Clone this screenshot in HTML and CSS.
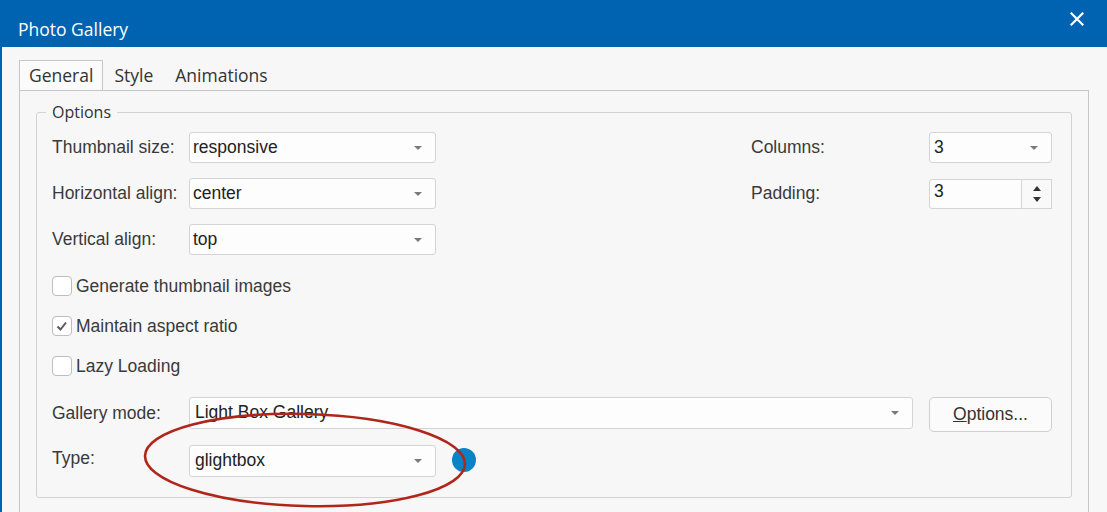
FILE: index.html
```html
<!DOCTYPE html>
<html lang="en">
<head>
  <meta charset="UTF-8" />
  <title>Photo Gallery</title>
  <link rel="stylesheet" href="styles.css">
</head>
<body>
  <div class="window">
    <div class="titlebar">
      <span class="title">Photo Gallery</span>
      <svg class="close" width="14" height="14" viewBox="0 0 14 14">
        <path d="M1.5 1.5 L12.5 12.5 M12.5 1.5 L1.5 12.5" stroke="#fff" stroke-width="2.2" stroke-linecap="square" />
      </svg>
    </div>

    <div class="content">
      <div class="tabs">
        <div class="tab active">General</div>
        <div class="tab">Style</div>
        <div class="tab">Animations</div>
      </div>

      <div class="panel">
        <fieldset class="options">
          <legend>Options</legend>

          <div class="row">
            <label class="lbl">Thumbnail size:</label>
            <div class="select">responsive<span class="arrow"></span></div>
            <label class="lbl lbl-right">Columns:</label>
            <div class="select small">3<span class="arrow"></span></div>
          </div>

          <div class="row">
            <label class="lbl">Horizontal align:</label>
            <div class="select">center<span class="arrow"></span></div>
            <label class="lbl lbl-right">Padding:</label>
            <div class="spin">
              <div class="spin-input">3</div>
              <div class="spin-btns">
                <span class="up"></span>
                <span class="down"></span>
              </div>
            </div>
          </div>

          <div class="row">
            <label class="lbl">Vertical align:</label>
            <div class="select">top<span class="arrow"></span></div>
          </div>

          <div class="checks">
            <div class="check">
              <span class="box"></span>
              <span>Generate thumbnail images</span>
            </div>
            <div class="check">
              <span class="box">
                <svg width="18" height="18" viewBox="0 0 18 18">
                  <path d="M4.5 9.5 L7.5 12.5 L13 5.5" fill="none" stroke="#5a5a5a" stroke-width="2" />
                </svg>
              </span>
              <span>Maintain aspect ratio</span>
            </div>
            <div class="check">
              <span class="box"></span>
              <span>Lazy Loading</span>
            </div>
          </div>

          <div class="row row-gallery">
            <label class="lbl">Gallery mode:</label>
            <div class="select wide">Light Box Gallery<span class="arrow"></span></div>
            <button class="btn"><u>O</u>ptions...</button>
          </div>

          <div class="row row-type">
            <label class="lbl">Type:</label>
            <div class="select">glightbox<span class="arrow"></span></div>
            <span class="info-dot"></span>
          </div>
        </fieldset>
      </div>
    </div>

    <!-- red annotation drawn over the Type row -->
    <svg class="mark" width="360" height="120" viewBox="0 0 360 120">
      <ellipse cx="165" cy="60" rx="160" ry="46" fill="none" stroke="#b1261b" stroke-width="2.6" transform="rotate(1.5 165 60)" />
    </svg>
  </div>
</body>
</html>
```

FILE: styles.css
```css
html, body {
  margin: 0;
  padding: 0;
  background: #f7f7f7;
  overflow: hidden;
}

.window {
  position: relative;
  height: 512px;
  overflow: hidden;
  border-left: 2px solid #0063b1;
  box-sizing: border-box;
  background: #f7f7f7;
}

.titlebar {
  height: 47px;
  background: #0063b1;
  display: flex;
  align-items: center;
  justify-content: space-between;
  padding: 0 23px 0 18px;
  margin-left: -2px;
}

.title {
  color: #fff;
  font-family: "Open Sans", "Noto Sans", sans-serif;
  font-size: 17.5px;
  margin-top: 11px;
}

.close {
  margin-top: -10px;
}

.content {
  padding: 13px 18px 0 17px;
}

.tabs {
  display: flex;
  font-family: "Open Sans", "Noto Sans", sans-serif;
  font-size: 17.5px;
  color: #333;
}

.tab {
  height: 29px;
  line-height: 29px;
  padding: 0 10px;
  border: 1px solid transparent;
  border-bottom: none;
}

.tab.active {
  padding: 0 9px 0 9px;
  background: #fbfbfb;
  border-color: #c6c6c6;
  position: relative;
  top: 1px;
  margin-top: -1px;
}

.panel {
  border: 1px solid #c6c6c6;
  padding: 10px 16px;
  height: 424px;
  box-sizing: border-box;
}

.options {
  margin: 0;
  border: 1px solid #d3d3d3;
  border-radius: 3px;
  padding: 9px 19px 20px 15px;
  font-family: "Liberation Sans", Arial, sans-serif;
  font-size: 17.5px;
  color: #3a3a3a;
}

.options legend {
  font-family: "Open Sans", "Noto Sans", sans-serif;
  font-size: 16px;
  line-height: 22px;
  padding: 0 6px;
  margin-left: -6px;
  color: #333;
}

.row {
  display: flex;
  align-items: center;
  height: 31px;
  margin-bottom: 15px;
}

.lbl {
  width: 137px;
  flex-shrink: 0;
}

.lbl-right {
  margin-left: auto;
  width: 178px;
}

.select {
  position: relative;
  width: 247px;
  height: 31px;
  box-sizing: border-box;
  border: 1px solid #d4d4d4;
  border-radius: 3px;
  background: #fdfdfd;
  padding-left: 3px;
  line-height: 28px;
  color: #222;
}

.select.small {
  width: 123px;
  padding-left: 4px;
}

.select.wide {
  flex: 1;
  height: 32px;
  padding-left: 5px;
}

.arrow {
  position: absolute;
  right: 13px;
  top: 13px;
  border-left: 4px solid transparent;
  border-right: 4px solid transparent;
  border-top: 4px solid #7a7a7a;
}

.spin {
  display: flex;
  width: 123px;
  height: 30px;
}

.spin-input {
  flex: 1;
  border: 1px solid #d4d4d4;
  border-radius: 3px 0 0 3px;
  background: #fdfdfd;
  line-height: 22px;
  padding-left: 4px;
  color: #222;
}

.spin-btns {
  width: 29px;
  border: 1px solid #d4d4d4;
  border-left: none;
  display: flex;
  flex-direction: column;
  align-items: center;
  justify-content: center;
  gap: 6px;
  background: #f9f9f9;
}

.spin-btns .up {
  border-left: 4px solid transparent;
  border-right: 4px solid transparent;
  border-bottom: 5px solid #333;
}

.spin-btns .down {
  border-left: 4px solid transparent;
  border-right: 4px solid transparent;
  border-top: 5px solid #333;
}

.checks {
  margin-top: -4px;
  margin-bottom: 11px;
}

.check {
  display: flex;
  align-items: center;
  gap: 4px;
  height: 40px;
}

.box {
  width: 20px;
  height: 20px;
  box-sizing: border-box;
  border: 1px solid #bdbdbd;
  border-radius: 4px;
  background: #fff;
  display: flex;
  align-items: center;
  justify-content: center;
}

.row-gallery {
  height: 35px;
  align-items: flex-start;
  margin-bottom: 13px;
}

.row-gallery .lbl {
  line-height: 32px;
}

.btn {
  margin-left: 16px;
  width: 123px;
  height: 35px;
  border: 1px solid #cfcfcf;
  border-radius: 5px;
  background: #fbfbfb;
  font-family: "Liberation Sans", Arial, sans-serif;
  font-size: 17.5px;
  color: #333;
}

.row-type {
  height: 32px;
  margin-bottom: 0;
}

.row-type .lbl {
  margin-top: -5px;
}

.row-type .select {
  height: 32px;
  padding-left: 5px;
}

.info-dot {
  width: 24px;
  height: 24px;
  border-radius: 50%;
  background: #0a82c6;
  margin-left: 16px;
  margin-top: -2px;
}

.mark {
  position: absolute;
  left: 138px;
  top: 400px;
}
```
